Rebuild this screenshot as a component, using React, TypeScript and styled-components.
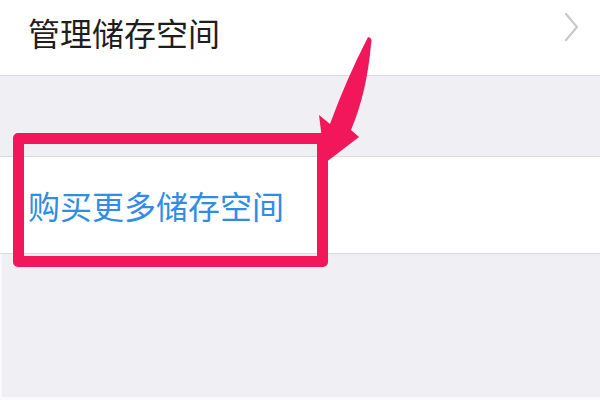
import React from 'react';
import styled, { createGlobalStyle } from 'styled-components';

const GlobalStyle = createGlobalStyle`
  html, body {
    margin: 0;
    padding: 0;
    background: #efeff4;
  }
  body {
    font-family: "Noto Sans CJK SC", "Noto Sans", sans-serif;
  }
`;

const Screen = styled.div`
  position: relative;
  width: 600px;
  height: 400px;
  overflow: hidden;
  background: #efeff4;
  display: flex;
  flex-direction: column;
`;

const Cell = styled.div<{ $height: number; $offset?: number }>`
  height: ${(p) => p.$height}px;
  background: #ffffff;
  border-bottom: 1px solid #d9d9de;
  display: flex;
  align-items: center;
  justify-content: space-between;
  padding: 0 21px 0 28px;
  padding-bottom: ${(p) => p.$offset || 0}px;
  box-sizing: border-box;
  flex-shrink: 0;
`;

const GroupGap = styled.div<{ $height: number }>`
  height: ${(p) => p.$height}px;
  border-bottom: 1px solid #d9d9de;
  flex-shrink: 0;
  box-sizing: border-box;
`;

const Filler = styled.div`
  flex: 1;
  border-left: 2px solid #fafafc;
  border-bottom: 3px solid #fafafc;
`;

const CellLabel = styled.span<{ $link?: boolean }>`
  font-size: 32px;
  line-height: 1;
  letter-spacing: 0;
  color: ${(p) => (p.$link ? '#2f8de6' : '#1e1e1e')};
`;

const Chevron = styled.svg`
  width: 15px;
  height: 30px;
  display: block;
  margin-bottom: 9px;
`;

const HighlightBox = styled.div`
  position: absolute;
  left: 13px;
  top: 133px;
  width: 315px;
  height: 134px;
  border: 11px solid #f2165b;
  border-radius: 5px;
  box-sizing: border-box;
  pointer-events: none;
`;

const ArrowMark = styled.svg`
  position: absolute;
  left: 0;
  top: 0;
  width: 600px;
  height: 400px;
  pointer-events: none;
`;

export default function App() {
  return (
    <>
      <GlobalStyle />
      <Screen>
        <Cell $height={76} $offset={12}>
          <CellLabel>管理储存空间</CellLabel>
          <Chevron viewBox="0 0 15 30">
            <path d="M2 2 L13 15 L2 28" fill="none" stroke="#c8c8cd" strokeWidth="2.2" strokeLinecap="round" strokeLinejoin="round" />
          </Chevron>
        </Cell>
        <GroupGap $height={81} />
        <Cell $height={97}>
          <CellLabel $link>购买更多储存空间</CellLabel>
        </Cell>
        <Filler />
        <HighlightBox />
        <ArrowMark viewBox="0 0 600 400">
          <path
            d="M368 37 Q373 38 371 44 Q367 92 351 130 L359 137 L325 163 L319 115 L330 124 Q346 80 368 37 Z"
            fill="#f2165b"
          />
        </ArrowMark>
      </Screen>
    </>
  );
}
